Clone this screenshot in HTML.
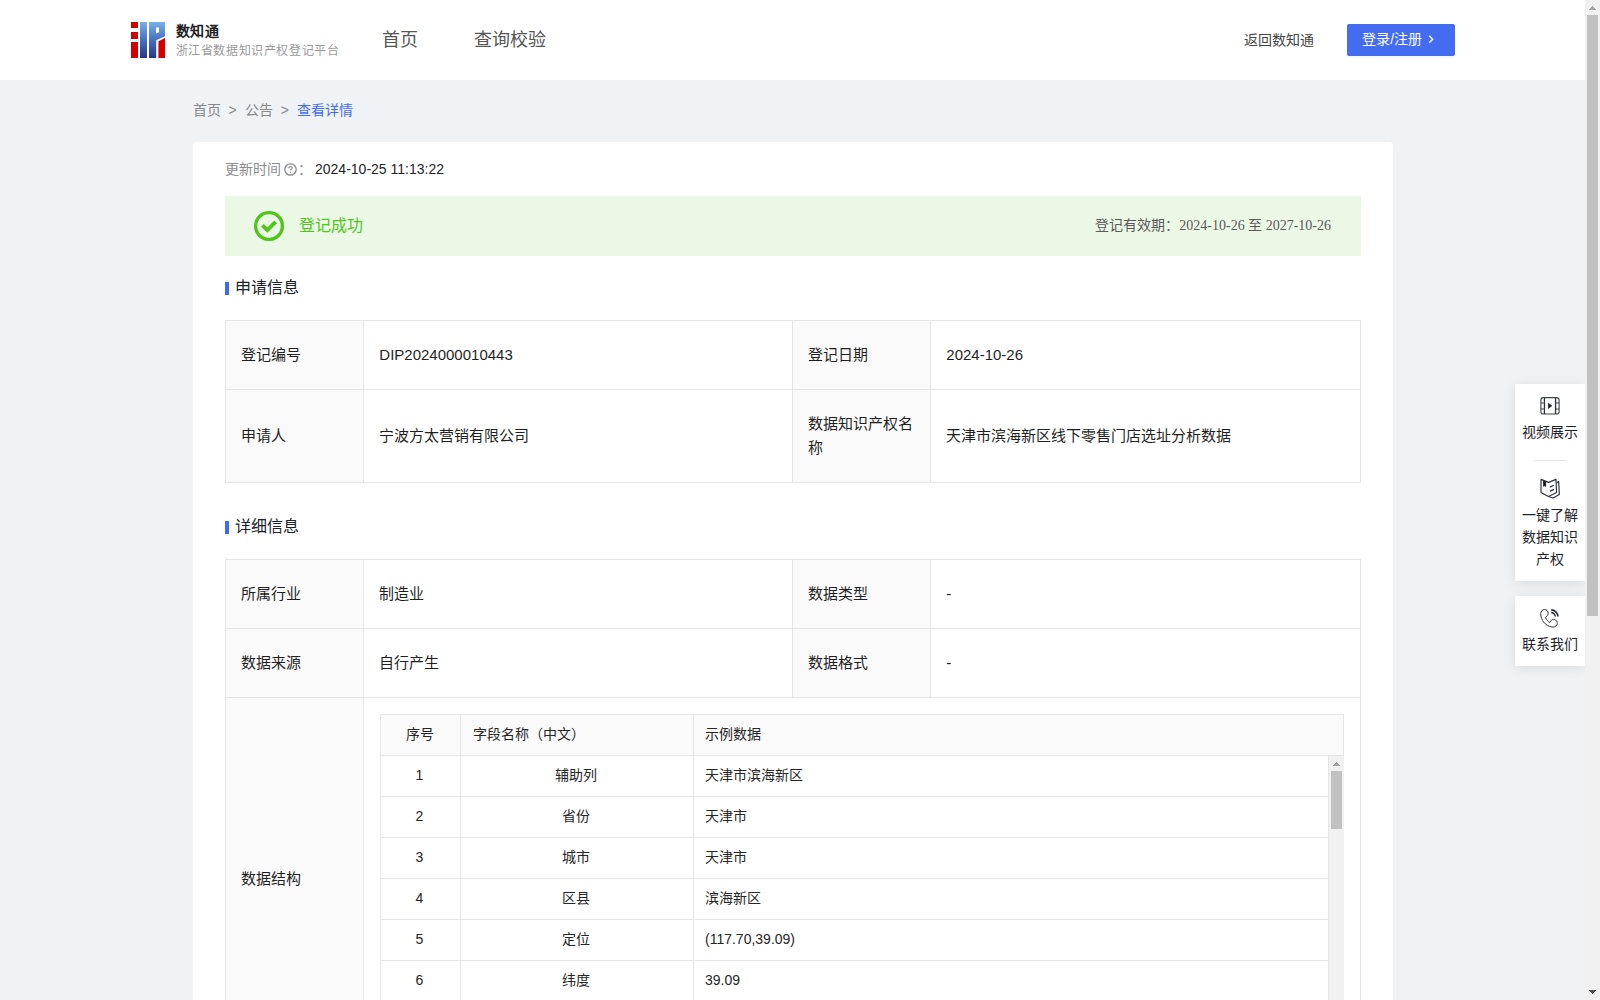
<!DOCTYPE html>
<html lang="zh-CN">
<head>
<meta charset="utf-8">
<title>查看详情</title>
<style>
*{box-sizing:border-box;}
html,body{margin:0;padding:0;}
body{width:1600px;height:1000px;overflow:hidden;background:#f0f3f6;font-family:"Liberation Sans",sans-serif;font-size:14px;color:#1f2329;position:relative;}
.abs{position:absolute;white-space:nowrap;}
/* header */
#hdr{position:absolute;left:0;top:0;width:1585px;height:80px;background:#fff;}
#logo{position:absolute;left:131px;top:22px;width:34px;height:36px;}
#brand{left:176px;top:22px;font-size:14px;font-weight:bold;line-height:18px;color:#222;letter-spacing:.3px;}
#sub{left:175.5px;top:43px;font-size:12px;line-height:16px;letter-spacing:.62px;color:#9a9a9a;}
.nav{font-size:18px;line-height:26px;color:#555;top:27px;}
#back{left:1244.3px;top:28.5px;font-size:14px;line-height:22px;color:#444;}
#login{position:absolute;left:1347px;top:24px;width:108px;height:32px;background:#446cf0;border-radius:2px;color:#fff;font-size:14px;line-height:30px;padding-left:15.3px;white-space:nowrap;box-shadow:0 2px 0 rgba(0,0,0,.03);}
#login svg{position:absolute;left:80px;top:9px;}
/* breadcrumb */
#bc{left:192.5px;top:99px;font-size:14px;line-height:22px;color:#86888a;}
#bc i{font-style:normal;margin:0 8px;}
#bc b{font-weight:normal;color:#3e6cf0;}
/* card */
#card{position:absolute;left:193px;top:142px;width:1200px;height:900px;background:#fff;border-radius:4px;padding:0 32px;}
#upd{position:absolute;left:32px;top:16px;line-height:22px;font-size:14px;color:#8c8c8c;white-space:nowrap;}
#upd span{color:#1f2329;margin-left:3px;}
#banner{position:absolute;left:32px;top:54px;width:1136px;height:60px;background:#ebf8e6;}
#banner .ok{position:absolute;left:73.5px;top:18px;font-size:16px;line-height:24px;color:#52c41a;white-space:nowrap;}
#banner .valid{position:absolute;right:30px;top:19px;font-family:"Liberation Serif",serif;font-size:14px;line-height:22px;color:#595959;white-space:nowrap;}
.sec{position:absolute;left:32px;height:24px;line-height:24px;font-size:16px;color:#1d2129;white-space:nowrap;padding-left:9.5px;}
.sec:before{content:"";position:absolute;left:0;top:6px;width:4px;height:13px;background:#4167f5;}
/* description table */
.desc{position:absolute;left:32px;width:1136px;border-right:1px solid #e5e5e5;border-bottom:1px solid #e5e5e5;font-size:15px;line-height:24px;color:#1f1f1f;}
.row{display:flex;}
.row>div{border-left:1px solid #e5e5e5;border-top:1px solid #e5e5e5;padding:22px 16px 22px 15.3px;display:flex;align-items:center;}
.row>.l{width:138px;background:#fafafa;}
.row>.v{width:429px;}
.row>.v2{width:430px;}
/* inner table */
#it{position:absolute;left:16px;top:16px;width:964px;font-size:14px;color:#262626;}
#it .r{display:flex;height:41px;line-height:38px;}
#it .r>div{border-left:1px solid #e5e5e5;border-top:1px solid #e5e5e5;white-space:nowrap;}
#it .h{background:#fafafa;height:42px;border-bottom:1px solid #e5e5e5;border-right:1px solid #e5e5e5;}
#it .c1{width:80px;text-align:center;padding-right:2px;}
#it .c2{width:233px;text-align:center;padding-right:2px;}
#it .h .c2{text-align:left;padding-left:12px;}
#it .c3{flex:1;padding-left:11px;}
#itb{position:relative;width:964px;height:320px;overflow:hidden;}
#itb .r>div{border-top:0;border-bottom:1px solid #e5e5e5;}
#itb .r{width:949px;border-right:1px solid #e5e5e5;}
#isb{position:absolute;left:949px;top:0;width:15px;height:320px;background:#f1f1f1;}
#isb i{position:absolute;left:2px;top:15px;width:11px;height:58px;background:#c1c1c1;}

/* page scrollbar */
#psb{position:absolute;left:1585px;top:0;width:15px;height:1000px;background:#f1f1f1;}
#psb i{position:absolute;left:2px;top:15px;width:11px;height:601px;background:#c1c1c1;}
.arr{position:absolute;left:4px;width:7px;height:4px;shape-rendering:crispEdges;}
/* float */
.fl{position:absolute;left:1515px;width:70px;background:#fff;box-shadow:0 2px 12px rgba(0,0,0,.1);font-size:14px;line-height:22px;color:#1f2329;text-align:center;}
.fl svg{position:absolute;}
.fl .t{position:absolute;left:0;width:70px;}
</style>
</head>
<body>
<div id="hdr">
  <svg id="logo" viewBox="0 0 34 36">
    <defs><linearGradient id="g" x1="0" y1="0" x2="0" y2="1"><stop offset="0" stop-color="#7aaeea"/><stop offset=".5" stop-color="#4570c2"/><stop offset="1" stop-color="#26368a"/></linearGradient></defs>
    <rect x="0" y="0" width="7" height="6" fill="#d40000"/>
    <rect x="0" y="10" width="7" height="7" fill="#d40000"/>
    <rect x="0" y="20" width="7" height="16" fill="#d40000"/>
    <rect x="9" y="0" width="7" height="36" fill="url(#g)"/>
    <path d="M18 0H34V14.3L25.2 18.3V36H18Z" fill="url(#g)"/>
    <path d="M25 5.5H28V10.2L25 11.6Z" fill="#fff"/>
    <path d="M27.4 19.2L34 16V36H27.4Z" fill="#d40000"/>
  </svg>
  <div class="abs" id="brand">数知通</div>
  <div class="abs" id="sub">浙江省数据知识产权登记平台</div>
  <div class="abs nav" style="left:382px">首页</div>
  <div class="abs nav" style="left:474px">查询校验</div>
  <div class="abs" id="back">返回数知通</div>
  <div id="login">登录/注册<svg width="8" height="12" viewBox="0 0 8 12"><path d="M2.2 2.7L5.7 6.2L2.2 9.7" fill="none" stroke="#fff" stroke-width="1.4"/></svg></div>
</div>

<div class="abs" id="bc">首页<i>&gt;</i>公告<i>&gt;</i><b>查看详情</b></div>

<div id="card">
  <div id="upd">更新时间<svg width="13" height="13" viewBox="0 0 13 13" style="vertical-align:-2px;margin:0 1px 0 3px"><circle cx="6.5" cy="6.5" r="5.7" fill="none" stroke="#8c8c8c" stroke-width="1.3"/><path d="M4.7 5.2C4.7 4.2 5.5 3.6 6.5 3.6C7.5 3.6 8.3 4.2 8.3 5.1C8.3 6.2 6.5 6.4 6.5 7.6" fill="none" stroke="#8c8c8c" stroke-width="1.1"/><circle cx="6.5" cy="9.3" r=".7" fill="#8c8c8c"/></svg>：<span>2024-10-25 11:13:22</span></div>
  <div id="banner">
    <svg width="30" height="30" viewBox="0 0 30 30" style="position:absolute;left:29px;top:15px"><circle cx="15" cy="15" r="13.4" fill="none" stroke="#52c41a" stroke-width="3.3"/><path d="M8.4 14.4L13.3 19.1L21.7 10.9" fill="none" stroke="#52c41a" stroke-width="3.9"/></svg>
    <div class="ok">登记成功</div>
    <div class="valid">登记有效期：2024-10-26 至 2027-10-26</div>
  </div>
  <div class="sec" style="top:134px">申请信息</div>
  <div class="desc" style="top:178px">
    <div class="row"><div class="l">登记编号</div><div class="v">DIP2024000010443</div><div class="l">登记日期</div><div class="v2">2024-10-26</div></div>
    <div class="row"><div class="l">申请人</div><div class="v">宁波方太营销有限公司</div><div class="l"><span style="white-space:nowrap">数据知识产权名<br>称</span></div><div class="v2">天津市滨海新区线下零售门店选址分析数据</div></div>
  </div>
  <div class="sec" style="top:373px">详细信息</div>
  <div class="desc" style="top:417px">
    <div class="row"><div class="l">所属行业</div><div class="v">制造业</div><div class="l">数据类型</div><div class="v2">-</div></div>
    <div class="row"><div class="l">数据来源</div><div class="v">自行产生</div><div class="l">数据格式</div><div class="v2">-</div></div>
    <div class="row" style="height:363px"><div class="l">数据结构</div><div style="width:997px;position:relative;padding:0">
      <div id="it">
        <div class="r h"><div class="c1">序号</div><div class="c2">字段名称（中文）</div><div class="c3">示例数据</div></div>
        <div id="itb">
          <div class="r"><div class="c1">1</div><div class="c2">辅助列</div><div class="c3">天津市滨海新区</div></div>
          <div class="r"><div class="c1">2</div><div class="c2">省份</div><div class="c3">天津市</div></div>
          <div class="r"><div class="c1">3</div><div class="c2">城市</div><div class="c3">天津市</div></div>
          <div class="r"><div class="c1">4</div><div class="c2">区县</div><div class="c3">滨海新区</div></div>
          <div class="r"><div class="c1">5</div><div class="c2">定位</div><div class="c3">(117.70,39.09)</div></div>
          <div class="r"><div class="c1">6</div><div class="c2">纬度</div><div class="c3">39.09</div></div>
          <div class="r"><div class="c1">7</div><div class="c2">经度</div><div class="c3">117.70</div></div>
          <div id="isb"><i></i><svg class="arr" style="top:6px" viewBox="0 0 7 4"><path d="M3 0h1v1h1v1h1v1h1v1h-7v-1h1v-1h1v-1h1z" fill="#a3a3a3"/></svg></div>
        </div>
      </div>
    </div></div>
  </div>
</div>

<div class="fl" style="top:384px;height:197px">
  <svg width="30" height="30" viewBox="0 0 30 30" style="left:20px;top:7px"><rect x="5.9" y="6.65" width="18.2" height="16.4" rx="2.4" fill="none" stroke="#3d424b" stroke-width="1.1"/><path d="M9.45 6.65V23.05M20.55 6.65V23.05" stroke="#2b2f38" stroke-width="1.3" fill="none"/><path d="M5.9 12H9.45M5.9 18H9.45M20.55 12H24.1M20.55 18H24.1" stroke="#3d424b" stroke-width="1.1" fill="none"/><path d="M13.4 12.3L16.8 14.85L13.4 17.4Z" fill="#1f2329" stroke="#1f2329" stroke-width=".7" stroke-linejoin="round"/></svg>
  <div class="t" style="top:37px">视频展示</div>
  <div style="position:absolute;left:19px;top:76px;width:32px;height:1px;background:#e3e5e8"></div>
  <svg width="30" height="30" viewBox="0 0 30 30" style="left:20px;top:90px"><path d="M6 5.4L13.5 8.4L21 5.4L21.6 18.6L13.5 22.5L6 18.6Z" fill="none" stroke="#2b2f38" stroke-width="1.15" stroke-linejoin="round"/><path d="M21.8 8.8L23.7 7.6L24.3 20.6L18 24L13.5 22.5" fill="none" stroke="#2b2f38" stroke-width="1.15" stroke-linejoin="round" stroke-linecap="round"/><path d="M8.1 6.2L11.1 7.4V13.2L9.6 12L8.1 12.8Z" fill="#1f2329"/><path d="M15.4 12.9L18.5 11.5M15.4 17.1L18.5 15.7" stroke="#2b2f38" stroke-width="1.3" stroke-linecap="round"/></svg>
  <div class="t" style="top:120px">一键了解<br>数据知识<br>产权</div>
</div>
<div class="fl" style="top:596px;height:70px">
  <svg width="30" height="30" viewBox="0 0 30 30" style="left:20px;top:7px"><path d="M9.3 6.5C7.5 6.5 5.7 8.5 5.7 10.5C5.7 14 7 17 8.7 19.2C10.5 21.5 13.5 23.3 16.8 24C18.5 24.3 20.5 24 21.9 21.9C22.8 20.5 22.3 18.3 20.7 17.1C19.5 16 17.5 16 16.2 17.4L14.7 19.5C13 18.5 11.5 16.8 10.5 14.7L12.3 12.6C13.5 11.4 13.5 9.3 12.3 7.8C11.5 6.9 10.5 6.5 9.3 6.5Z" fill="none" stroke="#2b2f38" stroke-width="1.0" stroke-linejoin="round"/><path d="M16.2 9.6A3.9 3.9 0 0 1 20.1 13.5M16.2 6.9A6.7 6.7 0 0 1 22.9 13.6" fill="none" stroke="#2b2f38" stroke-width="1.6"/></svg>
  <div class="t" style="top:37px">联系我们</div>
</div>

<div id="psb"><i></i><svg class="arr" style="top:6px" viewBox="0 0 7 4"><path d="M3 0h1v1h1v1h1v1h1v1h-7v-1h1v-1h1v-1h1z" fill="#a3a3a3"/></svg><svg class="arr" style="top:990px" viewBox="0 0 7 4"><path d="M0 0h7v1h-1v1h-1v1h-1v1h-1v-1h-1v-1h-1v-1h-1z" fill="#505050"/></svg></div>
</body>
</html>
